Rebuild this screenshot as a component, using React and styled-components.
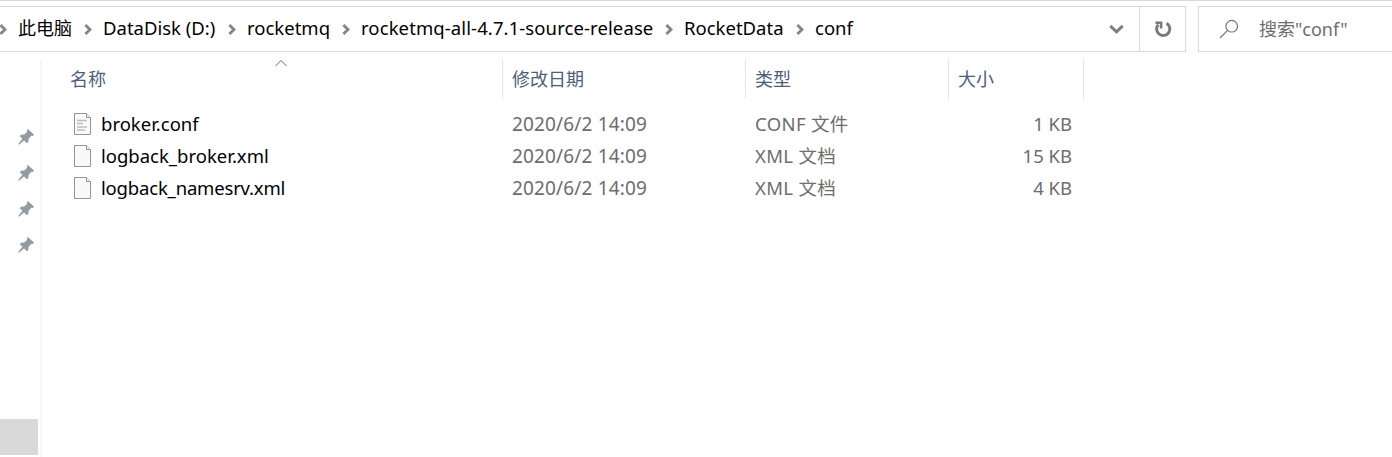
import React from 'react';
import styled, { createGlobalStyle } from 'styled-components';

const GlobalStyle = createGlobalStyle`
  * { box-sizing: border-box; }
  body {
    margin: 0;
    background: #fff;
    overflow: hidden;
    font-family: "Noto Sans", "Noto Sans CJK SC", sans-serif;
    font-size: 18px;
    line-height: 32px;
    color: #000;
  }
`;

const Window = styled.div`
  display: flex;
  flex-direction: column;
  width: 1392px;
  height: 457px;
  overflow: hidden;
  border-top: 1px solid #d9d9d9;
`;

const Toolbar = styled.div`
  display: flex;
  height: 51px;
  padding-top: 5px;
  gap: 12px;
`;

const AddressBar = styled.div`
  display: flex;
  width: 1186px;
  border: 1px solid #d9d9d9;
  border-left: 0;
`;

const Crumbs = styled.div`
  display: flex;
  flex: 1;
  height: 42px;
  margin-left: -1px;
`;

const Crumb = styled.div`
  display: flex;
  align-items: center;
  flex: none;
  width: ${(p) => p.$width}px;
  svg { flex: none; margin-top: 3px; }
`;

const Text = styled.span`
  display: block;
  white-space: pre;
  font-size: ${(p) => p.$size || 18}px;
  letter-spacing: ${(p) => p.$spacing || 0}px;
`;

const BarButton = styled.div`
  display: flex;
  align-items: center;
  justify-content: center;
  width: 46px;
  border-left: ${(p) => (p.$divided ? '1px solid #d9d9d9' : '0')};
`;

const SearchBox = styled.div`
  display: flex;
  align-items: center;
  flex: 1;
  gap: 20px;
  padding-left: 20px;
  border: 1px solid #d9d9d9;
  border-right: 0;
  color: #6d6d6d;
`;

const Body = styled.div`
  display: flex;
  flex: 1;
  padding-top: 7px;
`;

const Sidebar = styled.div`
  display: flex;
  flex-direction: column;
  width: 42px;
  border-right: 2px solid #f7f7f7;
`;

const Pins = styled.div`
  display: flex;
  flex-direction: column;
  flex: 1;
  padding: 60px 0 0 17px;
`;

const PinSlot = styled.div`
  display: flex;
  align-items: center;
  height: 36px;
`;

const Selected = styled.div`
  width: 38px;
  height: 36px;
  margin-bottom: 2px;
  background: #d9d9d9;
`;

const FileList = styled.div`
  flex: 1;
`;

const Row = styled.div`
  display: grid;
  grid-template-columns: 461px 243px 203px 135px;
  height: ${(p) => (p.$header ? 40 : 32)}px;
`;

const HeaderCell = styled.div`
  position: relative;
  display: flex;
  align-items: center;
  padding-left: ${(p) => (p.$first ? 28 : 9)}px;
  border-right: 1px solid #e5e5e5;
  color: #4c607a;
`;

const SortMark = styled.svg`
  position: absolute;
  left: 232px;
  top: 0;
`;

const Rows = styled.div`
  padding-top: 9px;
`;

const Cell = styled.div`
  display: flex;
  align-items: center;
  padding-left: 9px;
  color: #6d6d6d;
`;

const NameCell = styled(Cell)`
  gap: 10px;
  padding-left: 31px;
  color: #000;
`;

const SizeCell = styled(Cell)`
  justify-content: flex-end;
  padding-right: 12px;
`;

const ChevronRight = () => (
  <svg width="8" height="11" viewBox="0 0 8 11">
    <path d="M1.4 1 6 5.5 1.4 10" fill="none" stroke="#868686" strokeWidth="2.9" />
  </svg>
);

const ChevronDown = () => (
  <svg width="16" height="10" viewBox="0 0 16 10">
    <path d="M2.3 1.8 8.5 7.8 14.7 1.8" fill="none" stroke="#808080" strokeWidth="3" />
  </svg>
);

const Refresh = () => (
  <svg width="18" height="18" viewBox="0 0 18 18">
    <path d="M12.6 3.2A6.6 6.6 0 1 1 4.2 4.6" fill="none" stroke="#7a7a7a" strokeWidth="3" />
    <path d="M1.4 1.4H8.4V8.4H5.8V4H1.4Z" fill="#7a7a7a" />
  </svg>
);

const Search = () => (
  <svg width="20" height="20" viewBox="0 0 20 20" fill="none" stroke="#777" strokeWidth="1.2">
    <circle cx="12.7" cy="7.2" r="5.8" />
    <path d="M8.6 11.4 1 19" />
  </svg>
);

const Pin = () => (
  <svg width="18" height="18" viewBox="0 0 18 18" fill="#929ca3">
    <path d="M10.8 1 17 6.6 15.8 8.1 14.4 7.8 11.6 11 11.4 14 10 15.2 7 12.4 2 16.8 1.2 16 5.4 10.8 2.8 8.2 4 6.8 7.2 6.6 10.2 3.8 9.8 2.2Z" />
  </svg>
);

const FileIcon = ({ lined }) => (
  <svg width="18" height="22" viewBox="0 0 18 22">
    <path d="M1.5.5H13.5L17.5 4.5V21.5H1.5Z" fill="#f8f9f9" stroke="#959595" />
    <path d="M13.5 .5V4.5H17.5" fill="#f0f0f0" stroke="#959595" />
    {lined && <path d="M4 7.5H14M4 10.5H10M4 14H14M4 17H12" stroke="#bdbdbd" strokeWidth="1.3" />}
  </svg>
);

const crumbs = [
  { label: '此电脑', width: 85 },
  { label: 'DataDisk (D:)', width: 144, size: 18.5 },
  { label: 'rocketmq', width: 114, size: 18.5 },
  { label: 'rocketmq-all-4.7.1-source-release', width: 323, size: 18.5, spacing: 0.1 },
  { label: 'RocketData', width: 131, size: 18.5 },
  { label: 'conf', width: 80, size: 18.5 },
];

const CrumbText = styled(Text)`
  margin-left: 11px;
`;

const files = [
  { name: 'broker.conf', type: 'CONF 文件', size: '1 KB', lined: true },
  { name: 'logback_broker.xml', type: 'XML 文档', size: '15 KB' },
  { name: 'logback_namesrv.xml', type: 'XML 文档', size: '4 KB', spacing: -0.18 },
];

export default function App() {
  return (
    <Window>
      <GlobalStyle />
      <Toolbar>
        <AddressBar>
          <Crumbs>
            {crumbs.map((c) => (
              <Crumb key={c.label} $width={c.width}>
                <ChevronRight />
                <CrumbText $size={c.size} $spacing={c.spacing}>{c.label}</CrumbText>
              </Crumb>
            ))}
          </Crumbs>
          <BarButton><ChevronDown /></BarButton>
          <BarButton $divided><Refresh /></BarButton>
        </AddressBar>
        <SearchBox>
          <Search />
          <Text>搜索"conf"</Text>
        </SearchBox>
      </Toolbar>
      <Body>
        <Sidebar>
          <Pins>
            {[0, 1, 2, 3].map((n) => (
              <PinSlot key={n}><Pin /></PinSlot>
            ))}
          </Pins>
          <Selected />
        </Sidebar>
        <FileList>
          <Row $header>
            <HeaderCell $first>
              <Text>名称</Text>
              <SortMark width="14" height="8" viewBox="0 0 14 8">
                <path d="M1.5 7 7 1.5 12.5 7" fill="none" stroke="#666" />
              </SortMark>
            </HeaderCell>
            <HeaderCell><Text>修改日期</Text></HeaderCell>
            <HeaderCell><Text>类型</Text></HeaderCell>
            <HeaderCell><Text>大小</Text></HeaderCell>
          </Row>
          <Rows>
            {files.map((f) => (
              <Row key={f.name}>
                <NameCell>
                  <FileIcon lined={f.lined} />
                  <Text $size={18.5} $spacing={f.spacing}>{f.name}</Text>
                </NameCell>
                <Cell><Text $size={19} $spacing={0.15}>2020/6/2 14:09</Text></Cell>
                <Cell><Text $size={18.5} $spacing={0.35}>{f.type}</Text></Cell>
                <SizeCell><Text $size={18.5}>{f.size}</Text></SizeCell>
              </Row>
            ))}
          </Rows>
        </FileList>
      </Body>
    </Window>
  );
}
